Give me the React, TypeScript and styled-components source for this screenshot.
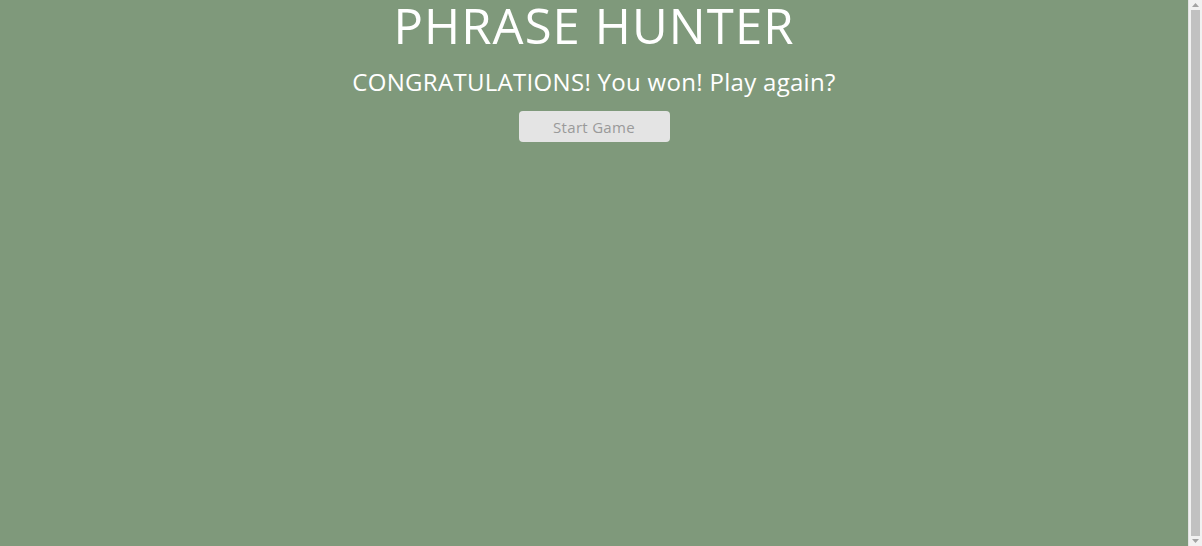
import React from "react";
import styled, { createGlobalStyle } from "styled-components";

const GlobalStyle = createGlobalStyle`
  html, body {
    margin: 0;
    padding: 0;
    overflow: hidden;
  }
  body {
    background: #7f997b;
    font-family: "Open Sans", "Noto Sans", sans-serif;
  }
`;

const Page = styled.div`
  display: flex;
  height: 100vh;
`;

const Overlay = styled.main`
  flex: 1;
  display: flex;
  flex-direction: column;
  align-items: center;
  background: #7f997b;
  color: #ffffff;
`;

const Title = styled.h2`
  margin: 0;
  font-size: 49px;
  font-weight: 400;
  line-height: 50px;
  letter-spacing: 1.1px;
`;

const Message = styled.h1`
  margin: 16px 0 0;
  font-size: 24px;
  font-weight: 500;
  line-height: 32px;
  letter-spacing: 0.3px;
`;

const StartButton = styled.button`
  margin-top: 13px;
  width: 151px;
  height: 31px;
  border: none;
  border-radius: 4px;
  background: #e4e4e4;
  color: #9a9a9a;
  font-family: "Open Sans", "Noto Sans", sans-serif;
  font-size: 15px;
  letter-spacing: 0.3px;
  cursor: pointer;
`;

const Scrollbar = styled.aside`
  width: 13px;
  display: flex;
  flex-direction: column;
  align-items: center;
  background: #f1f1f1;
  border-left: 1px solid #e2e2e2;
`;

const Arrow = styled.div`
  height: 10px;
  display: flex;
  align-items: center;
  justify-content: center;
`;

const Thumb = styled.div`
  flex: 1;
  width: 9px;
  background: #c1c1c1;
`;

export default function App() {
  return (
    <>
      <GlobalStyle />
      <Page>
        <Overlay>
          <Title>PHRASE HUNTER</Title>
          <Message>CONGRATULATIONS! You won! Play again?</Message>
          <StartButton>Start Game</StartButton>
        </Overlay>
        <Scrollbar>
          <Arrow>
            <svg width="7" height="4" viewBox="0 0 7 4">
              <path d="M0 4 L3.5 0 L7 4 Z" fill="#a3a3a3" />
            </svg>
          </Arrow>
          <Thumb />
          <Arrow>
            <svg width="7" height="4" viewBox="0 0 7 4">
              <path d="M0 0 L3.5 4 L7 0 Z" fill="#a3a3a3" />
            </svg>
          </Arrow>
        </Scrollbar>
      </Page>
    </>
  );
}
